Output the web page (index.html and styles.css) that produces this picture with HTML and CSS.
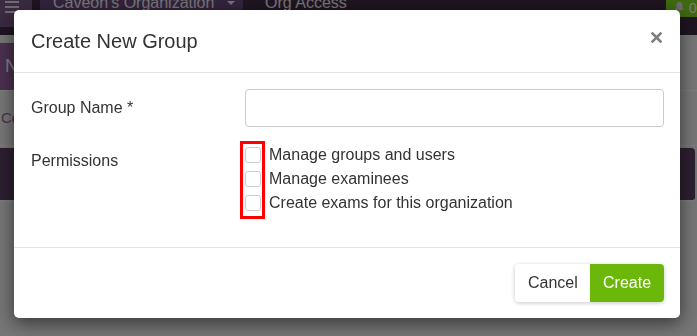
FILE: index.html
```html
<!DOCTYPE html>
<html lang="en">
<head>
    <meta charset="UTF-8">
    <meta name="viewport" content="width=device-width, initial-scale=1.0">
    <title>Create New Group</title>
    <link rel="stylesheet" href="styles.css">
</head>
<body>

<div class="page">
    <div class="topbar">
        <div class="menu-btn"><span></span><span></span><span></span></div>
        <div class="org-switch">Caveon's Organization <span class="caret"></span></div>
        <div class="nav-link">Org Access</div>
        <div class="notify">
            <svg width="9" height="10" viewBox="0 0 9 10"><path d="M4.5 0C2.6 0 1.4 1.5 1.4 3.4V6L0 8h9L7.6 6V3.4C7.6 1.5 6.4 0 4.5 0zM3.3 8.6a1.2 1.2 0 0 0 2.4 0z" fill="#d8d8d8"/></svg>
            <span>0</span>
        </div>
    </div>
    <div class="toolbar">
        <button class="btn-new">New Group</button>
    </div>
    <div class="crumbs">Conditions</div>
    <div class="table-head"></div>
</div>

<div class="backdrop"></div>

<div class="modal">
    <div class="modal-header">
        <h4 class="modal-title">Create New Group</h4>
        <button class="close" aria-label="Close">
            <svg width="11" height="11" viewBox="0 0 11 11"><path d="M1.5 1.5l8 8M9.5 1.5l-8 8" stroke="#7d7d7d" stroke-width="2.6" stroke-linecap="square"/></svg>
        </button>
    </div>
    <div class="modal-body">
        <div class="form-row">
            <label for="group-name" class="control-label">Group Name *</label>
            <input type="text" id="group-name" class="form-control">
        </div>
        <div class="form-row">
            <label class="control-label perm-label">Permissions</label>
            <div class="perm-list">
                <label class="perm"><input type="checkbox">Manage groups and users</label>
                <label class="perm"><input type="checkbox">Manage examinees</label>
                <label class="perm"><input type="checkbox">Create exams for this organization</label>
                <div class="highlight"></div>
            </div>
        </div>
    </div>
    <div class="modal-footer">
        <div class="btn-group">
            <button class="btn btn-cancel">Cancel</button>
            <button class="btn btn-create">Create</button>
        </div>
    </div>
</div>

</body>
</html>
```

FILE: styles.css
```css
body {
    margin: 0;
    font-family: "Liberation Sans", Arial, sans-serif;
    background-color: #ececec;
    overflow: hidden;
}
.page {
    width: 697px;
    height: 336px;
}

/* top navigation (behind the dialog) */
.topbar {
    display: flex;
    height: 35px;
    background-color: #3e2a42;
    color: #f1e9f4;
    font-size: 16px;
}
.menu-btn {
    width: 32px;
    height: 27px;
    box-sizing: border-box;
    padding: 1px 0 0 5px;
    background-color: #765686;
    display: flex;
    flex-direction: column;
    gap: 3px;
}
.menu-btn span {
    width: 14px;
    height: 2px;
    background-color: #e0d8e4;
}
.org-switch {
    margin: -5px 0 0 8px;
    width: 203px;
    height: 32px;
    box-sizing: border-box;
    padding-left: 13px;
    line-height: 16px;
    background-color: #66497a;
}
.caret {
    display: inline-block;
    margin-left: 8px;
    vertical-align: 3px;
    border-left: 4px solid transparent;
    border-right: 4px solid transparent;
    border-top: 4px solid #f1e9f4;
}
.nav-link {
    margin: -5px 0 0 22px;
    line-height: 16px;
}
.notify {
    margin-left: auto;
    height: 17px;
    width: 31px;
    box-sizing: border-box;
    padding: 2px 0 0 9px;
    display: flex;
    align-items: flex-start;
    gap: 5px;
    background-color: #7ed422;
    border-radius: 0 0 0 9px;
    color: #f4ffe8;
    font-size: 14px;
    line-height: 12px;
}
.toolbar {
    margin-top: 8px;
    height: 47px;
}
.btn-new {
    height: 47px;
    padding: 0 14px 0 5px;
    border: none;
    background-color: #96609f;
    color: #fff;
    font-family: inherit;
    font-size: 18px;
}
.crumbs {
    height: 54px;
    border-top: 1px solid #fafafa;
    border-bottom: 1px solid #fafafa;
    line-height: 54px;
    padding-left: 1px;
    font-size: 15px;
    color: #93669f;
}
.table-head {
    margin: 2px 2px 0 0;
    height: 52px;
    background-color: #5a3f62;
    border-radius: 0 4px 4px 0;
    border-bottom: 2px solid #f6f6f6;
}

.backdrop {
    position: fixed;
    top: 0;
    left: 0;
    right: 0;
    bottom: 0;
    background-color: rgba(0, 0, 0, 0.5);
}

/* dialog */
.modal {
    position: absolute;
    left: 14px;
    top: 10px;
    width: 666px;
    background-color: #fff;
    border-radius: 5px;
    box-shadow: 0 5px 18px rgba(0, 0, 0, 0.55);
    color: #333;
}
.modal-header {
    height: 62px;
    padding: 0 18px 0 17px;
    border-bottom: 1px solid #e5e5e5;
    display: flex;
    align-items: center;
    justify-content: space-between;
}
.modal-title {
    margin: 0;
    font-size: 20px;
    font-weight: normal;
}
.close {
    align-self: flex-start;
    margin-top: 22px;
    padding: 0;
    border: none;
    background: none;
    cursor: pointer;
    display: flex;
}
.modal-body {
    padding: 16px 16px 32px 17px;
}
.form-row {
    display: grid;
    grid-template-columns: 214px 1fr;
    align-items: center;
    font-size: 16px;
}
.form-row + .form-row {
    margin-top: 16px;
    align-items: start;
}
.control-label {
    line-height: 24px;
}
.perm-label {
    padding-top: 6px;
}
.form-control {
    height: 38px;
    box-sizing: border-box;
    border: 1px solid #ccc;
    border-radius: 4px;
    padding: 6px 12px;
    font-family: inherit;
    font-size: 16px;
}
.perm-list {
    position: relative;
}
.perm {
    display: flex;
    align-items: center;
    gap: 8px;
    line-height: 24px;
}
.perm input {
    appearance: none;
    margin: 0;
    width: 16px;
    height: 16px;
    border: 1px solid #ccc;
    border-radius: 3px;
    background-color: #fff;
}
.highlight {
    position: absolute;
    left: -5px;
    top: -2px;
    width: 25px;
    height: 78px;
    box-sizing: border-box;
    border: 3px solid #f00;
}
.modal-footer {
    border-top: 1px solid #e5e5e5;
    padding: 16px 16px 16px 0;
    display: flex;
    justify-content: flex-end;
}
.btn-group {
    display: flex;
    border-radius: 4px;
    box-shadow: 0 1px 4px rgba(0, 0, 0, 0.22);
}
.btn {
    height: 38px;
    padding: 0 13px;
    border: none;
    font-family: inherit;
    font-size: 16px;
    cursor: pointer;
}
.btn-cancel {
    width: 75px;
    background-color: #fff;
    color: #333;
    border-radius: 4px 0 0 4px;
}
.btn-create {
    width: 74px;
    background-color: #6bb80a;
    color: #fff;
    border-radius: 0 4px 4px 0;
}
```
